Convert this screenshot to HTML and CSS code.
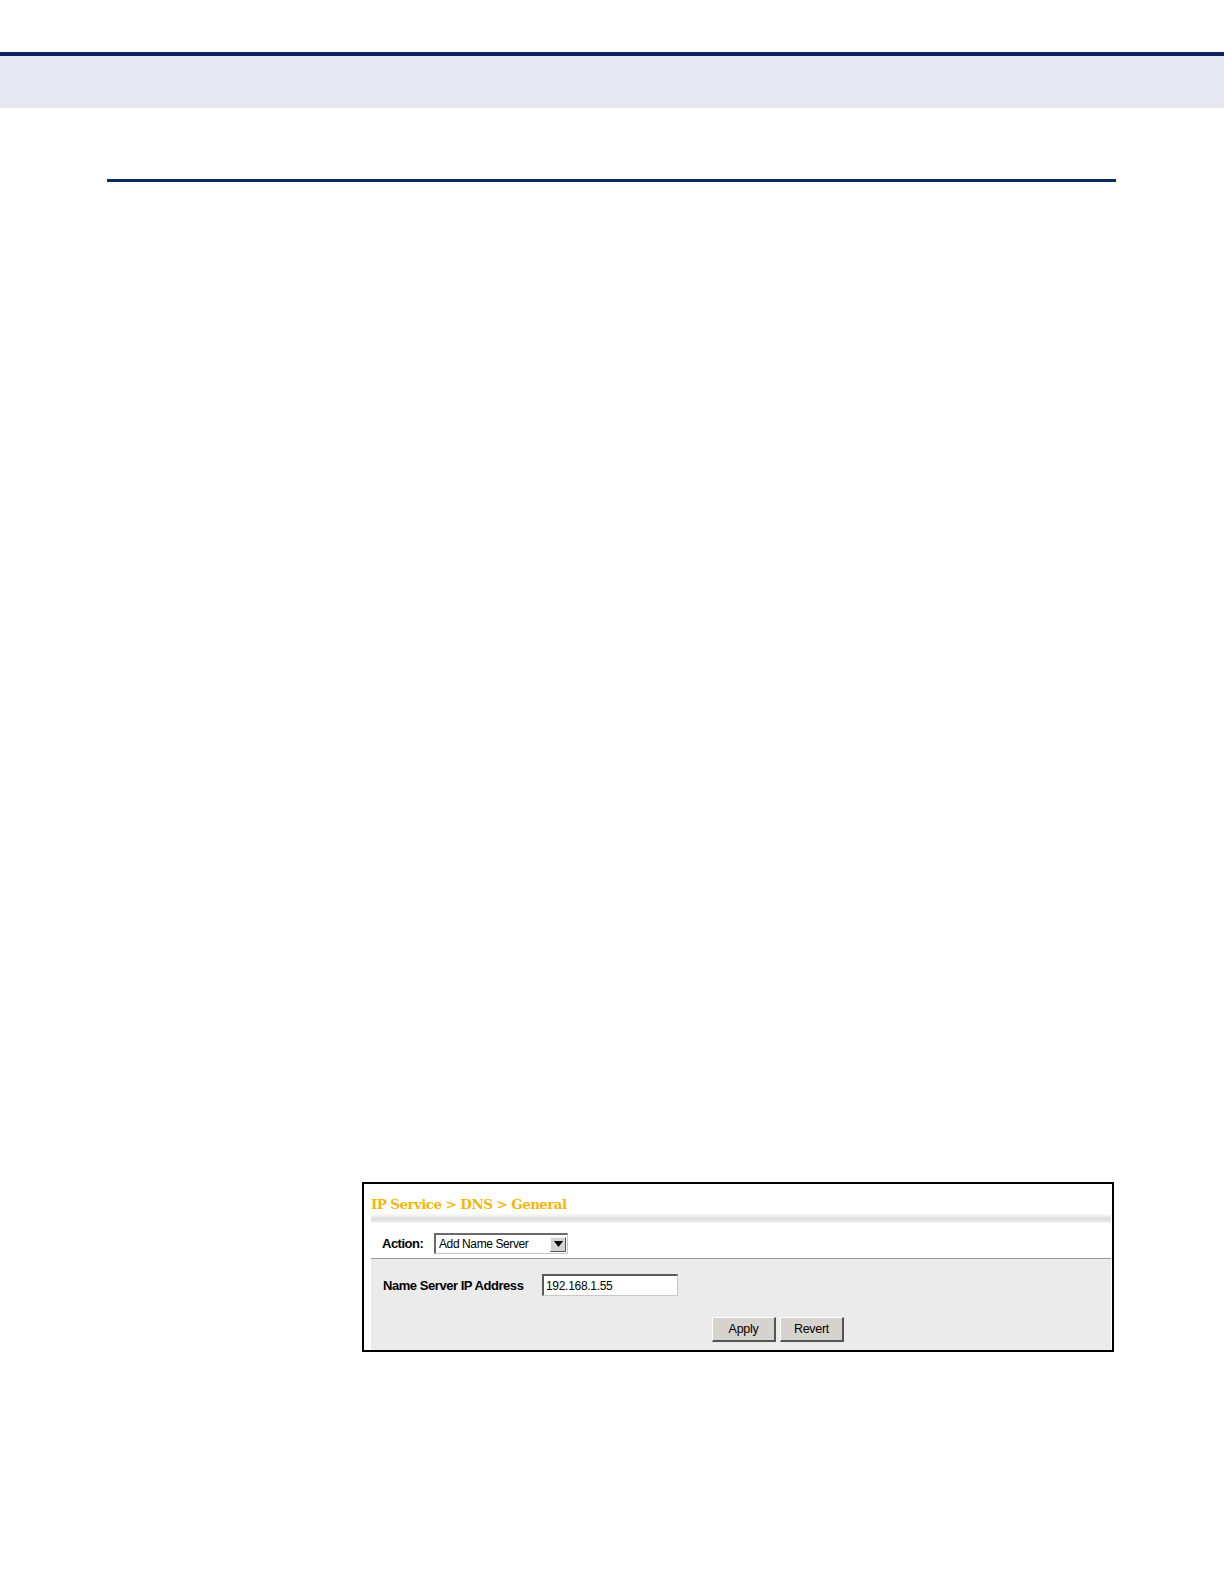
FILE: index.html
```html
<!DOCTYPE html>
<html>
<head>
<meta charset="utf-8">
<link rel="stylesheet" href="styles.css">
</head>
<body>
<div class="header"></div>
<div class="rule"></div>
<div class="shot">
  <div class="shot-inner">
    <div class="crumb">IP Service &gt; DNS &gt; General</div>
    <div class="action-row">
      <span class="action-label">Action:</span>
      <div class="select">
        <span class="select-text">Add Name Server</span>
        <span class="select-btn"><svg width="9" height="6" viewBox="0 0 9 6"><polygon points="0,0 9,0 4.5,6" fill="#000"/></svg></span>
      </div>
    </div>
    <div class="panel">
      <div class="field-row">
        <span class="field-label">Name Server IP Address</span>
        <div class="input">192.168.1.55</div>
      </div>
      <div class="buttons">
        <div class="btn">Apply</div>
        <div class="btn">Revert</div>
      </div>
    </div>
  </div>
</div>
</body>
</html>
```
FILE: styles.css
```css
html, body {
  margin: 0;
  padding: 0;
  background: #fff;
}
body {
  font-family: "Liberation Sans", Arial, sans-serif;
  width: 1224px;
  height: 1584px;
}
.header {
  margin-top: 52px;
  border-top: 4px solid #0b2461;
  height: 52px;
  background: #e5e8f0;
}
.rule {
  margin: 71px 0 0 107px;
  width: 1009px;
  height: 3px;
  background: #0b2a5e;
}
.shot {
  margin: 1000px 0 0 362px;
  width: 748px;
  height: 166px;
  border: 2px solid #000;
  background: #fff;
  display: flex;
}
.shot-inner {
  flex: 1;
  margin: 0 1px 0 7px;
  display: flex;
  flex-direction: column;
}
.crumb {
  height: 39px;
  box-sizing: border-box;
  padding: 12px 0 0 0;
  font-family: "DejaVu Serif", "Liberation Serif", serif;
  font-weight: bold;
  font-size: 13.5px;
  color: #f4b60c;
  letter-spacing: -0.6px;
  background: linear-gradient(#fff 0, #fff 74%, #f4f4f4 80%, #dddddd 88%, #e0e0e0 92%, #f7f7f7 100%);
}
.action-row {
  height: 36px;
  display: flex;
  align-items: center;
  padding: 6px 0 0 11px;
  border-bottom: 1px solid #9a9a9a;
  box-sizing: border-box;
}
.action-label {
  font-weight: bold;
  font-size: 13px;
  color: #000;
  letter-spacing: -0.5px;
  width: 52px;
}
.select {
  width: 134px;
  height: 21px;
  box-sizing: border-box;
  border-top: 2px solid #6a6a6a;
  border-left: 2px solid #6a6a6a;
  border-right: 1px solid #c8c8c8;
  border-bottom: 1px solid #c8c8c8;
  display: flex;
  align-items: center;
  background: #fff;
}
.select-text {
  flex: 1;
  font-size: 12px;
  padding-left: 3px;
  letter-spacing: -0.4px;
  color: #000;
}
.select-btn {
  width: 16px;
  height: 15px;
  margin-right: 1px;
  background: #d6d3ce;
  border-top: 1px solid #f4f4f4;
  border-left: 1px solid #f4f4f4;
  border-right: 1px solid #555;
  border-bottom: 1px solid #555;
  box-sizing: border-box;
  display: flex;
  align-items: center;
  justify-content: center;
}
.panel {
  flex: 1;
  background: #ebebeb;
  display: flex;
  flex-direction: column;
}
.field-row {
  display: flex;
  align-items: center;
  padding: 15px 0 0 12px;
}
.field-label {
  font-weight: bold;
  font-size: 13px;
  letter-spacing: -0.45px;
  color: #000;
  width: 159px;
}
.input {
  width: 136px;
  height: 22px;
  box-sizing: border-box;
  background: #fff;
  border-top: 2px solid #5a5a5a;
  border-left: 2px solid #5a5a5a;
  border-right: 1px solid #c8c8c8;
  border-bottom: 1px solid #c8c8c8;
  font-size: 12px;
  letter-spacing: -0.3px;
  padding: 3px 0 0 2px;
  color: #000;
}
.buttons {
  display: flex;
  gap: 4px;
  padding: 21px 0 0 341px;
}
.btn {
  width: 64px;
  height: 25px;
  box-sizing: border-box;
  background: #d6d3ce;
  border-top: 1px solid #fff;
  border-left: 1px solid #fff;
  border-right: 2px solid #555;
  border-bottom: 2px solid #555;
  font-size: 12.5px;
  letter-spacing: -0.3px;
  display: flex;
  align-items: center;
  justify-content: center;
  color: #000;
}
```
